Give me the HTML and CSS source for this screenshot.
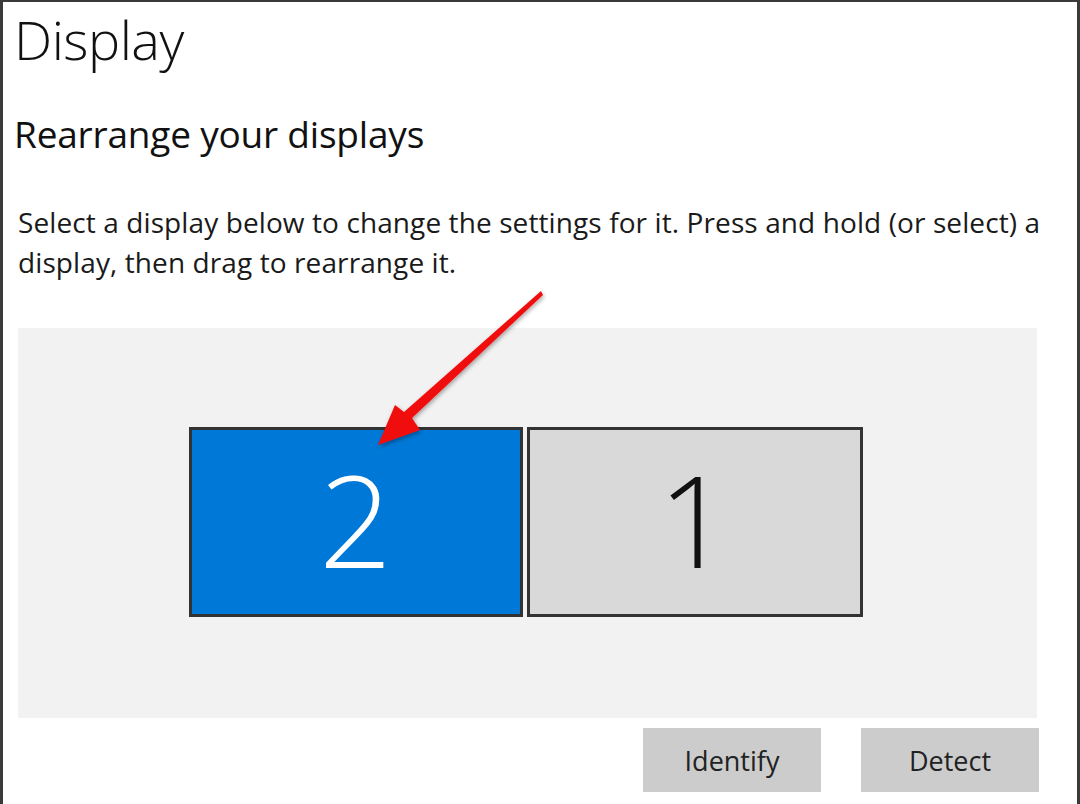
FILE: index.html
```html
<!DOCTYPE html>
<html lang="en">
<head>
<meta charset="utf-8">
<title>Display</title>
<link rel="stylesheet" href="styles.css">
</head>
<body>
<div class="frame">
  <h1 class="title">Display</h1>
  <h2 class="subtitle">Rearrange your displays</h2>
  <p class="desc">Select a display below to change the settings for it. Press and hold (or select) a display, then drag to rearrange it.</p>
  <div class="canvas">
    <div class="monitors">
      <div class="monitor selected">2</div>
      <div class="monitor">1</div>
    </div>
  </div>
  <div class="actions">
    <button class="btn">Identify</button>
    <button class="btn">Detect</button>
  </div>
  <svg class="arrow" width="1080" height="804" viewBox="0 0 1080 804">
    <defs>
      <filter id="shade" x="-20%" y="-20%" width="140%" height="140%">
        <feDropShadow dx="1" dy="2" stdDeviation="2" flood-color="#000" flood-opacity="0.35"/>
      </filter>
    </defs>
    <path d="M541 291 L543 295 L412 418 L420 430 L378 445 L395 405 L404 412 Z" fill="#f00c0c" filter="url(#shade)"/>
  </svg>
</div>
</body>
</html>
```
FILE: styles.css
```css
html, body {
  margin: 0;
  padding: 0;
  background: #fff;
}

.frame {
  position: relative;
  box-sizing: border-box;
  width: 1080px;
  height: 804px;
  border-top: 2px solid #3a3a3a;
  border-left: 3px solid #3a3a3a;
  border-right: 3px solid #3a3a3a;
  padding: 0 30px 0 11px;
  font-family: "Open Sans", "Noto Sans", sans-serif;
  color: #111;
  overflow: hidden;
}

.title {
  margin: 2px 0 0 0;
  font-size: 54px;
  font-weight: 300;
  line-height: 70px;
  letter-spacing: -0.5px;
}

.subtitle {
  margin: 35px 0 0 0;
  font-size: 37px;
  font-weight: 400;
  line-height: 50px;
  letter-spacing: -0.2px;
}

.desc {
  margin: 43px 0 0 4px;
  font-size: 28px;
  line-height: 40px;
  color: #1a1a1a;
  letter-spacing: 0.1px;
}

.canvas {
  margin: 46px 0 0 4px;
  width: 1019px;
  height: 390px;
  background: #f2f2f2;
  display: flex;
  align-items: center;
  justify-content: center;
}

.monitors {
  display: flex;
  gap: 4px;
  margin: -2px 0 0 -4px;
}

.monitor {
  box-sizing: border-box;
  width: 336px;
  height: 190px;
  border: 3px solid #333;
  background: #d9d9d9;
  display: flex;
  align-items: center;
  justify-content: center;
  padding-bottom: 6px;
  font-size: 128px;
  font-weight: 300;
  color: #111;
  line-height: 1;
}

.monitor.selected {
  width: 334px;
  background: #0078d7;
  color: #fff;
}

.actions {
  display: flex;
  justify-content: flex-end;
  gap: 40px;
  margin: 10px 0 0 0;
  width: 1025px;
}

.btn {
  width: 178px;
  height: 64px;
  border: 0;
  background: #cccccc;
  font-family: inherit;
  font-size: 27px;
  color: #222;
  padding: 0;
}

.arrow {
  position: absolute;
  left: -3px;
  top: -2px;
  pointer-events: none;
}
```
